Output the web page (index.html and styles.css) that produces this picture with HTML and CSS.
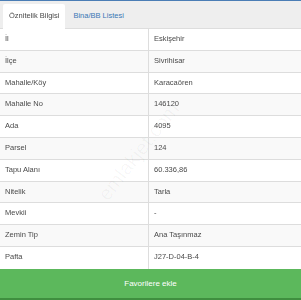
FILE: index.html
```html
<!DOCTYPE html>
<html lang="tr">
<head>
    <meta charset="UTF-8">
    <meta name="viewport" content="width=device-width, initial-scale=1.0">
    <title>Öznitelik Bilgisi</title>
    <link rel="stylesheet" href="styles.css">
</head>
<body>
    <div class="panel">
        <ul class="tabs">
            <li class="tab active">Öznitelik Bilgisi</li>
            <li class="tab">Bina/BB Listesi</li>
        </ul>

        <div class="info">
            <div class="row"><span class="label">İl</span><span class="value">Eskişehir</span></div>
            <div class="row"><span class="label">İlçe</span><span class="value">Sivrihisar</span></div>
            <div class="row"><span class="label">Mahalle/Köy</span><span class="value">Karacaören</span></div>
            <div class="row"><span class="label">Mahalle No</span><span class="value">146120</span></div>
            <div class="row"><span class="label">Ada</span><span class="value">4095</span></div>
            <div class="row"><span class="label">Parsel</span><span class="value">124</span></div>
            <div class="row"><span class="label">Tapu Alanı</span><span class="value">60.336,86</span></div>
            <div class="row"><span class="label">Nitelik</span><span class="value">Tarla</span></div>
            <div class="row"><span class="label">Mevkii</span><span class="value">-</span></div>
            <div class="row"><span class="label">Zemin Tip</span><span class="value">Ana Taşınmaz</span></div>
            <div class="row"><span class="label">Pafta</span><span class="value">J27-D-04-B-4</span></div>
        </div>

        <button type="button" class="fav">Favorilere ekle</button>

        <div class="watermark">emlakjet.com</div>
    </div>
</body>
</html>
```

FILE: styles.css
```css
body {
    font-family: "Liberation Sans", Arial, sans-serif;
    margin: 0;
    padding: 0;
    background-color: #fff;
    color: #555;
}

.panel {
    position: relative;
    width: 301px;
    height: 300px;
    overflow: hidden;
    display: flex;
    flex-direction: column;
}

.tabs {
    list-style: none;
    margin: 0;
    padding: 3px 0 0 3px;
    height: 24px;
    display: flex;
    gap: 2px;
    background-color: #eeeeee;
    border-top: 1px solid #4a7db5;
    border-bottom: 1px solid #dddddd;
}

.tab {
    font-size: 7.5px;
    line-height: 24px;
    padding: 0 6px;
    color: #3a78b5;
}

.tab.active {
    background-color: #fff;
    color: #4a4a4a;
    height: 25px;
    border-radius: 2px 2px 0 0;
    filter: grayscale(1);
}

.info {
    display: flex;
    flex-direction: column;
    filter: grayscale(1);
}

.row {
    display: grid;
    grid-template-columns: 149px 1fr;
    height: 21.8px;
    box-sizing: border-box;
    border-bottom: 1px solid #dddddd;
    font-size: 7.5px;
    line-height: 20.8px;
    color: #4a4a4a;
}

.row:nth-child(even) {
    background-color: #f9f9f9;
}

.row:last-child {
    border-bottom: none;
}

.label {
    padding-left: 5px;
    border-right: 1px solid #dddddd;
}

.value {
    padding-left: 5px;
}

.fav {
    flex: 1;
    margin: 0;
    border: none;
    border-bottom: 2px solid #3f8f3f;
    background-color: #5cb85c;
    color: #fff;
    font-family: "Liberation Sans", Arial, sans-serif;
    font-size: 8px;
    cursor: pointer;
}

.watermark {
    position: absolute;
    left: 80px;
    top: 140px;
    font-size: 20px;
    color: rgba(0, 0, 0, 0.035);
    transform: rotate(-52deg);
    pointer-events: none;
}
```
